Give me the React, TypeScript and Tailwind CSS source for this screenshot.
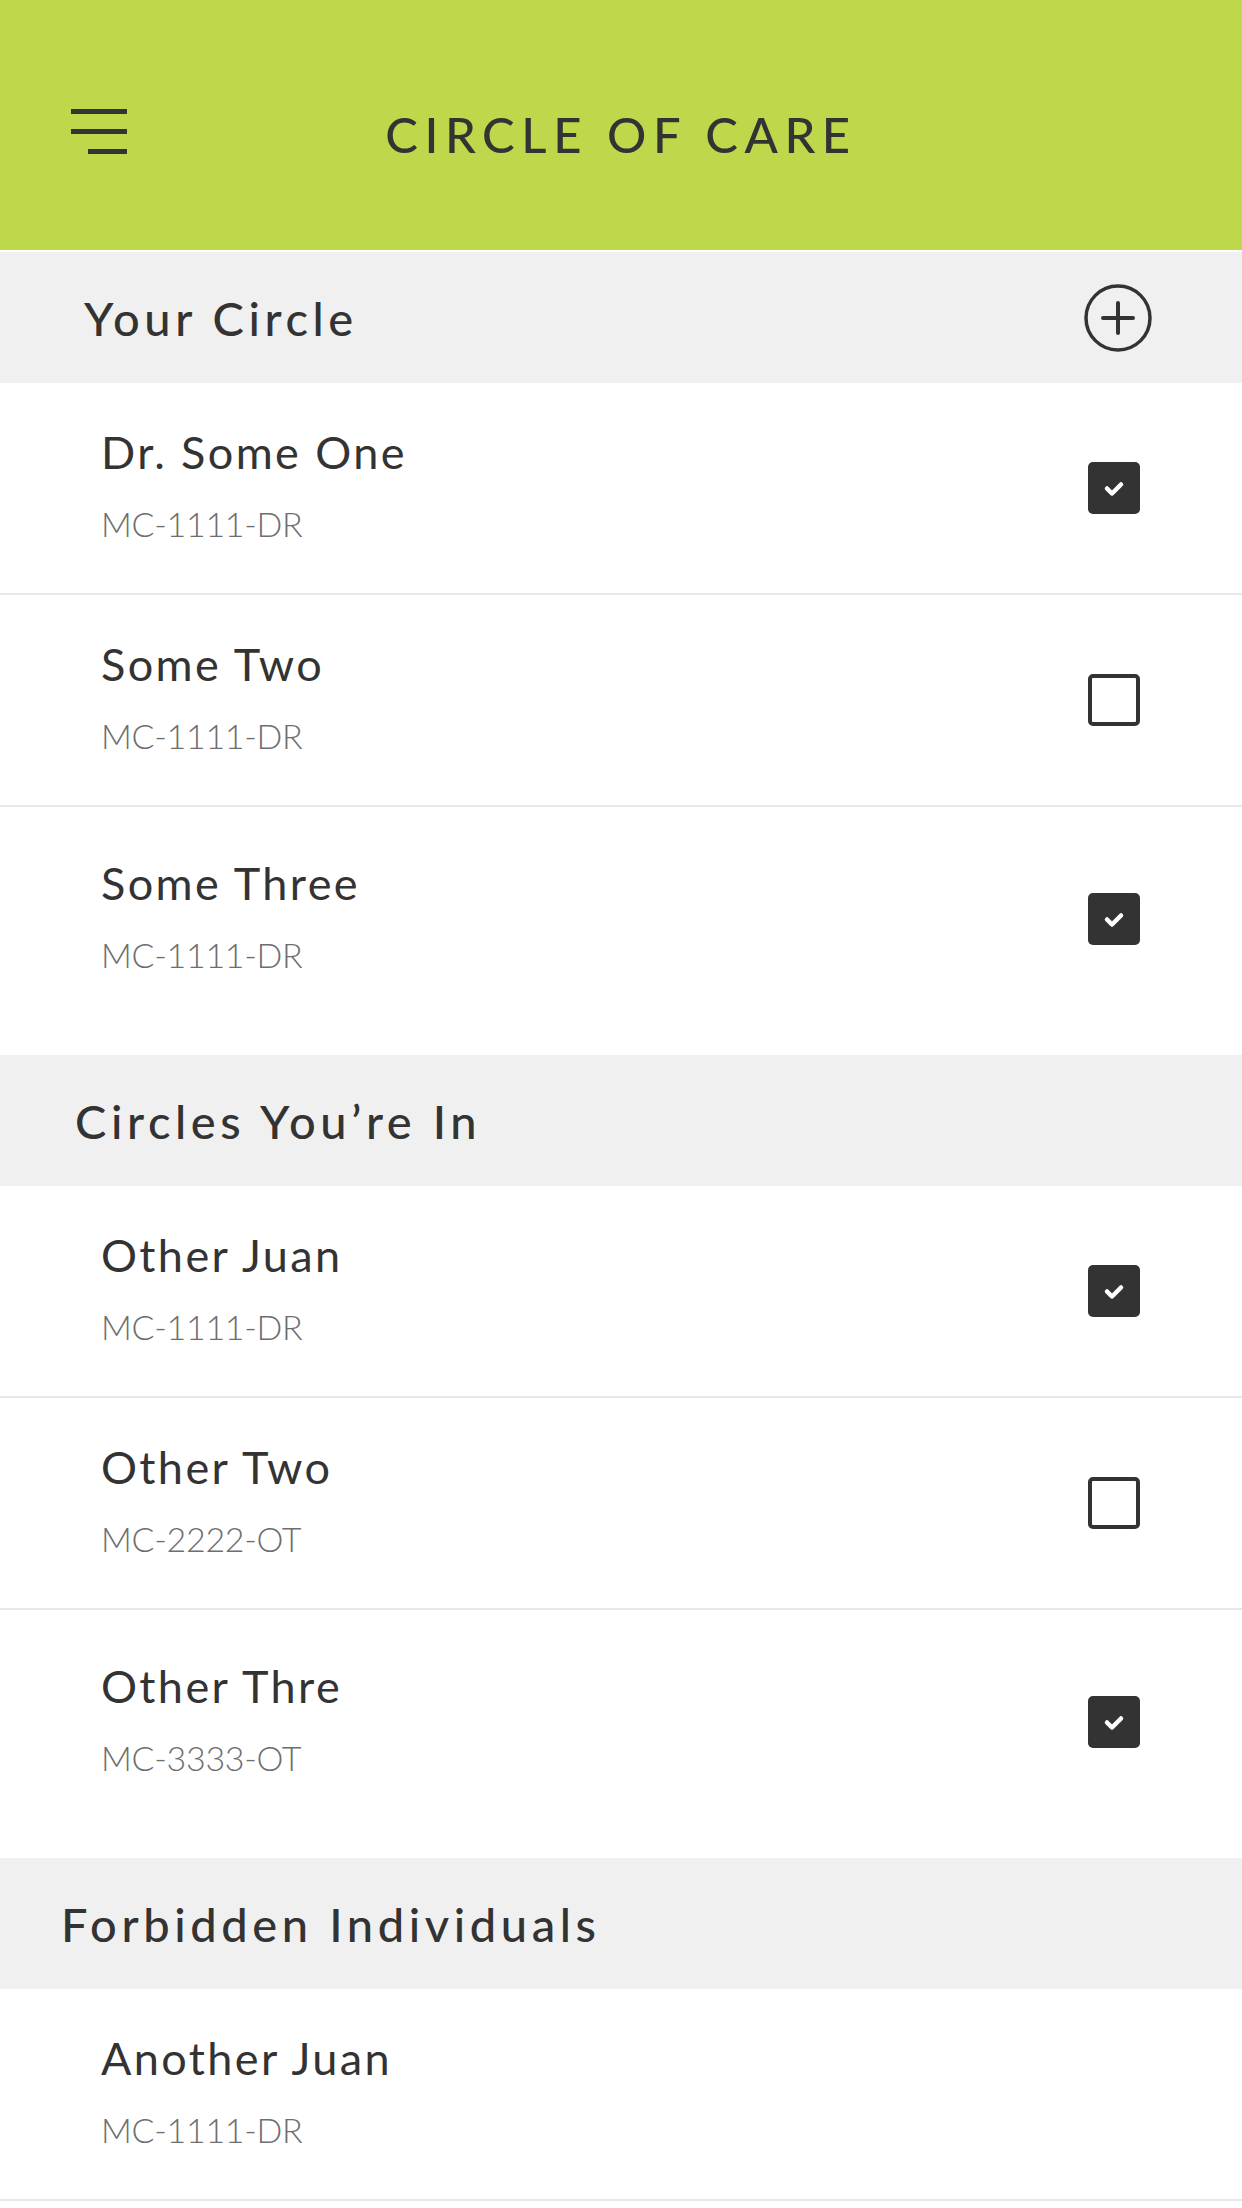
import React from "react";

type Person = {
  name: string;
  code: string;
  checked?: boolean;
};

type Section = {
  title: string;
  indent: string;
  showAdd?: boolean;
  showCheck?: boolean;
  people: Person[];
};

const sections: Section[] = [
  {
    title: "Your Circle",
    indent: "pl-[84px]",
    showAdd: true,
    showCheck: true,
    people: [
      { name: "Dr. Some One", code: "MC-1111-DR", checked: true },
      { name: "Some Two", code: "MC-1111-DR", checked: false },
      { name: "Some Three", code: "MC-1111-DR", checked: true },
    ],
  },
  {
    title: "Circles You’re In",
    indent: "pl-[75px]",
    showCheck: true,
    people: [
      { name: "Other Juan", code: "MC-1111-DR", checked: true },
      { name: "Other Two", code: "MC-2222-OT", checked: false },
      { name: "Other Thre", code: "MC-3333-OT", checked: true },
    ],
  },
  {
    title: "Forbidden Individuals",
    indent: "pl-[61px]",
    people: [{ name: "Another Juan", code: "MC-1111-DR" }],
  },
];

function Checkbox({ checked }: { checked?: boolean }) {
  if (checked) {
    return (
      <div className="w-[52px] h-[52px] rounded-[5px] bg-[#333333] flex items-center justify-center">
        <svg width="26" height="26" viewBox="0 0 26 26" fill="none">
          <path
            d="M6 13.5 L11 18.5 L20 9.5"
            stroke="#ffffff"
            strokeWidth="4.5"
            strokeLinecap="round"
            strokeLinejoin="round"
          />
        </svg>
      </div>
    );
  }
  return (
    <div className="w-[52px] h-[52px] rounded-[5px] border-[4px] border-[#333333] bg-white" />
  );
}

function AddIcon() {
  return (
    <svg width="70" height="70" viewBox="0 0 70 70" fill="none">
      <circle cx="35" cy="35" r="32" stroke="#333333" strokeWidth="3.5" />
      <path
        d="M35 20 V50 M20 35 H50"
        stroke="#333333"
        strokeWidth="4"
        strokeLinecap="round"
      />
    </svg>
  );
}

function PersonRow({
  person,
  last,
  showCheck,
}: {
  person: Person;
  last: boolean;
  showCheck?: boolean;
}) {
  return (
    <div
      className={
        last
          ? "h-[248px] pb-[24px] flex items-center justify-between pl-[101px] pr-[102px]"
          : "h-[212px] border-b-2 border-[#e8e8e8] flex items-center justify-between pl-[101px] pr-[102px]"
      }
    >
      <div className="flex flex-col mb-[7px]">
        <span className="text-[45px] leading-[56px] text-[#333333] tracking-[2.4px]">
          {person.name}
        </span>
        <span className="mt-[23px] text-[34px] leading-[42px] text-[#6e6e6e] font-light tracking-[-0.3px]">
          {person.code}
        </span>
      </div>
      {showCheck && <Checkbox checked={person.checked} />}
    </div>
  );
}

export default function App() {
  return (
    <div className="w-[1242px] h-[2208px] overflow-hidden bg-white font-['Lato',sans-serif]">
      {/* Top bar */}
      <div className="h-[250px] bg-[#bed84b] grid grid-cols-[1fr_auto_1fr] items-center pt-[12px]">
        <div className="pl-[71px] flex flex-col items-end w-[127px] gap-[15px]">
          <span className="block w-[56px] h-[5px] bg-[#333333]" />
          <span className="block w-[56px] h-[5px] bg-[#333333]" />
          <span className="block w-[39px] h-[5px] bg-[#333333]" />
        </div>
        <h1 className="mt-[5px] text-[49px] leading-[60px] text-[#333333] tracking-[6.6px] font-medium">
          CIRCLE OF CARE
        </h1>
        <div />
      </div>
      <div className="h-[2px] bg-white" />

      {sections.map((section) => (
        <div key={section.title}>
          <div
            className={`h-[131px] bg-[#f0f0f0] flex items-center justify-between pr-[89px] ${section.indent}`}
          >
            <h2 className="text-[47px] leading-[58px] text-[#333333] font-medium tracking-[4.6px]">
              {section.title}
            </h2>
            {section.showAdd && <AddIcon />}
          </div>
          {section.people.map((p, i) => (
            <PersonRow
              key={p.name}
              person={p}
              showCheck={section.showCheck}
              last={i === section.people.length - 1 && section.people.length > 1}
            />
          ))}
        </div>
      ))}
    </div>
  );
}
